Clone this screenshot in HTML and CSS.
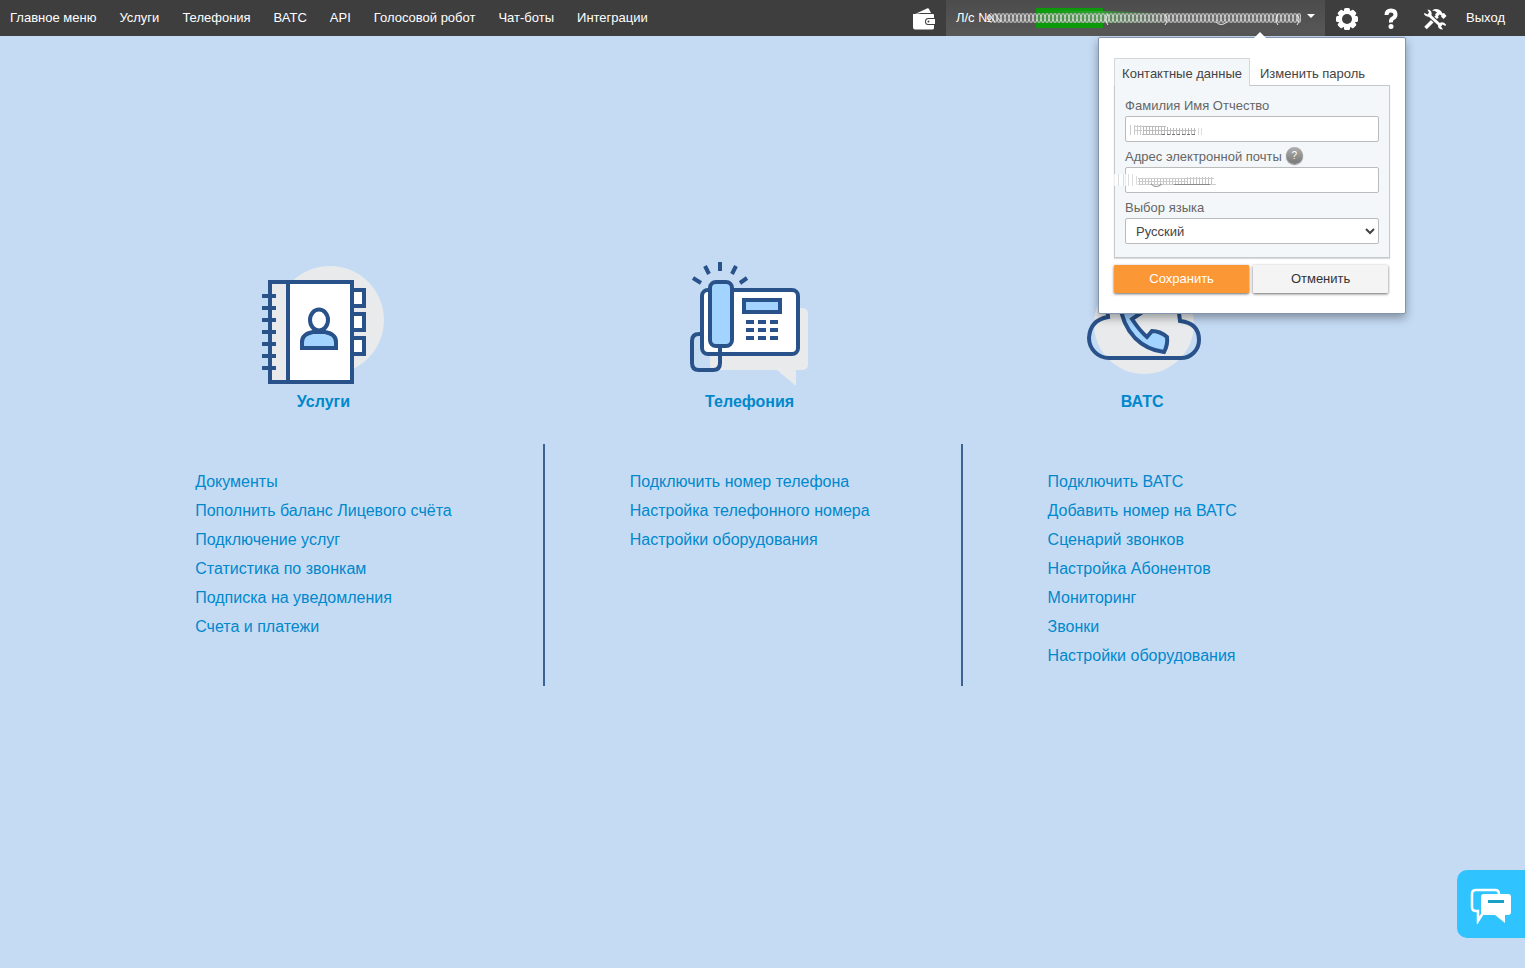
FILE: index.html
```html
<!DOCTYPE html>
<html lang="ru">
<head>
<meta charset="utf-8">
<title>Главное меню</title>
<link rel="stylesheet" href="styles.css">
</head>
<body>
<header class="topbar">
  <nav class="nav">
    <a href="#">Главное меню</a>
    <a href="#">Услуги</a>
    <a href="#">Телефония</a>
    <a href="#">ВАТС</a>
    <a href="#">API</a>
    <a href="#">Голосовой робот</a>
    <a href="#">Чат-боты</a>
    <a href="#">Интеграции</a>
  </nav>
  <div class="tools">
    <button class="tool" type="button" aria-label="Баланс">
      <svg width="24" height="24" viewBox="0 0 24 24"><path d="M3 7 L15 1.500 Q16.500 1 17 2 L19 6 H9z" fill="#fff"/><path d="M1 7H21Q22 7 22 8V11H16Q13 11 13 14.500T16 18H22V21Q22 22.500 20 22.500H3Q1 22.500 1 20z" fill="#fff"/><path d="M16 12H23V17H16Q14 17 14 14.500T16 12z" fill="#fff"/><circle cx="16.500" cy="14.500" r="1" fill="#3e3e3e"/></svg>
    </button>
    <div class="account">
      <button class="account-button" type="button" aria-label="Лицевой счёт">
        <span>Л/с №</span>
        <svg class="account-mask" viewBox="-5 0 313 22" width="313" height="22" aria-hidden="true">
          <defs>
            <pattern id="loops" width="4" height="22" patternUnits="userSpaceOnUse"><ellipse cx="2" cy="11" rx="1.800" ry="4.500" fill="none" stroke="#e4e4e4" stroke-width="1" opacity=".8"/></pattern>
            <linearGradient id="green" x1="0" x2="1"><stop offset="0" stop-color="#0b9a0b"/><stop offset=".4" stop-color="#2fa52f"/><stop offset="1" stop-color="#555" stop-opacity="0"/></linearGradient>
          </defs>
          <rect x="43" y="1" width="67" height="20" fill="#0a9a0a"/>
          <path d="M43 3L110 4L200 7V16H43z" fill="url(#green)"/>
          <path d="M0 6H308V16H0z" fill="#888" opacity=".5"/>
          <rect x="-5" y="5" width="313" height="12" fill="url(#loops)"/>
          <path d="M-4 7l6 8M2 7l6 8M115 7q-4 6 0 11M172 7q4 6 0 11M223 15q5 5 11 0M285 7q-4 6 0 11M304 7q4 6 0 11" fill="none" stroke="#eee"/>
        </svg>
        <span class="caret"></span>
      </button>
      <form class="popup">
        <div class="tabs">
          <button class="tab tab-active" type="button">Контактные данные</button>
          <button class="tab" type="button">Изменить пароль</button>
        </div>
        <div class="panel">
          <div class="field">
            <label for="name">Фамилия Имя Отчество</label>
            <input id="name" type="text">
            <svg class="mask" width="80" height="14" viewBox="0 0 80 14" aria-hidden="true">
              <path d="M4.500 3v10M8.500 3v10M11.500 3v10M14.500 3v10" stroke="#ccc"/>
              <path d="M9 4.500h7M9 8.500h7" stroke="#ccc"/>
              <path d="M17.500 4v9M20.500 4v9M23.500 4v9M26.500 4v9M29.500 4v9M32.500 4v9M35.500 4v9M38.500 5v8M41.500 5v8M44.500 6v7M47.500 6v7M50.500 6v7M53.500 6v7M56.500 6v7M59.500 6v7M62.500 6v7M65.500 6v7M68.500 6v7" stroke="#bbb"/>
              <path d="M16 4.500h24M18 8.500h52M16 12.500h22" stroke="#bbb"/>
              <path d="M36 12.500h34" stroke="#777" stroke-dasharray="3 2"/>
              <path d="M72.500 6v7M75.500 6v7" stroke="#ddd"/>
            </svg>
          </div>
          <div class="field">
            <div class="label-row"><label for="email">Адрес электронной почты</label><button class="help" type="button" aria-label="Справка">?</button></div>
            <input id="email" type="email">
            <svg class="mask mask-wide" width="106" height="14" viewBox="0 0 106 14" aria-hidden="true">
              <path d="M0 1h16v12H0z" fill="#fff" opacity=".7"/>
              <path d="M4.500 1v12M9.500 1v12M14.500 1v12M18.500 1v12M22.500 3v9" stroke="#ddd"/>
              <path d="M25.500 5v7M28.500 5v7M31.500 5v7M34.500 5v7M37.500 5v7M40.500 5v7M43.500 5v7M46.500 5v7M49.500 5v7M52.500 5v7M55.500 5v7M58.500 5v7M61.500 5v7M64.500 5v7M67.500 5v7M70.500 5v7M73.500 4v8M76.500 4v8M79.500 4v8M82.500 4v8M85.500 4v8M88.500 4v8M91.500 4v8M94.500 4v8M97.500 4v8" stroke="#c4c4c4"/>
              <path d="M24 5.500h76M24 8.500h50M24 11.500h78" stroke="#ccc"/>
              <path d="M37 11q5 5 11 0M60 11.500h36" stroke="#888" fill="none"/>
            </svg>
          </div>
          <div class="field">
            <label for="lang">Выбор языка</label>
            <select id="lang"><option>Русский</option></select>
          </div>
        </div>
        <div class="actions">
          <button class="action primary" type="submit">Сохранить</button>
          <button class="action" type="reset">Отменить</button>
        </div>
      </form>
    </div>
    <button class="tool" type="button" aria-label="Настройки">
      <svg width="22" height="22" viewBox="0 0 22 22"><g fill="#fff"><circle cx="11" cy="11" r="9"/><g id="teeth"><rect x="8" y="0" width="6" height="22" rx="1.500"/><rect x="0" y="8" width="22" height="6" rx="1.500"/></g><use href="#teeth" transform="rotate(45 11 11)"/></g><circle cx="11" cy="11" r="5" fill="#3e3e3e"/></svg>
    </button>
    <button class="tool" type="button" aria-label="Помощь">
      <svg width="16" height="22" viewBox="0 0 16 22"><path d="M3.500 7Q3.500 2.500 8 2.500T12.500 6.500Q12.500 9 10 10.200T8 14.500" fill="none" stroke="#fff" stroke-width="4"/><circle cx="8" cy="18.500" r="2.500" fill="#fff"/></svg>
    </button>
    <button class="tool" type="button" aria-label="Инструменты">
      <svg width="24" height="22" viewBox="0 0 24 22">
        <path d="M2.500 20L14.500 8" stroke="#fff" stroke-width="3.500"/>
        <path d="M9 2.500Q14-.5 18 3L19.500 5.500L21 5L23.500 8L20.500 11L18 8.500L18.500 7.500L16.500 6.500L14.500 9L12 6.500L14 4.500Q12 2.500 9 2.500z" fill="#fff"/>
        <path d="M6 7L18 18" stroke="#3e3e3e" stroke-width="5"/>
        <path d="M6 7L18 18" stroke="#fff" stroke-width="3"/>
        <path d="M4.500 1.500Q9.500 2 8.500 7.500Q4 10.500 .8 6L1.500 5L4.500 6.500L6 4.500z" fill="#fff"/>
        <path d="M20 21.500Q14.500 21.500 15 16.500Q19 12 23 16.500L22.500 18L19.500 16.500L18 18.500z" fill="#fff"/>
      </svg>
    </button>
    <a class="logout" href="#">Выход</a>
  </div>
</header>

<main class="main">
  <section class="column">
    <div class="head">
      <svg width="128" height="128" viewBox="0 0 128 128" aria-hidden="true">
        <circle cx="71" cy="62" r="54" fill="#e8eaeb"/>
        <g stroke="#29528a" stroke-width="4">
          <path d="M93 32h12v16H93zM93 56h12v16H93zM93 80h12v16H93z" fill="#fff"/>
          <path d="M11 24h82v100H11z" fill="#fff"/>
          <path d="M11 24h18v100H11z" fill="#e8eaeb"/>
          <path d="M3 38h14M3 50h14M3 62h14M3 74h14M3 86h14M3 98h14M3 110h14"/>
          <path d="M43 90V84Q43 76 54 74H66Q77 76 77 84V90z" fill="#a3d3ff"/>
          <ellipse cx="60" cy="62" rx="9" ry="10.500" fill="#fff"/>
        </g>
      </svg>
      <a class="title" href="#">Услуги</a>
    </div>
    <ul class="links">
      <li><a href="#">Документы</a></li>
      <li><a href="#">Пополнить баланс Лицевого счёта</a></li>
      <li><a href="#">Подключение услуг</a></li>
      <li><a href="#">Статистика по звонкам</a></li>
      <li><a href="#">Подписка на уведомления</a></li>
      <li><a href="#">Счета и платежи</a></li>
    </ul>
  </section>
  <section class="column">
    <div class="head">
      <svg width="128" height="128" viewBox="0 0 128 128" aria-hidden="true">
        <path d="M30 50H116Q122 50 122 56V106Q122 112 116 112H110V128L91 112H30Q24 112 24 106V56Q24 50 30 50z" fill="#e8eaeb"/>
        <g stroke="#29528a" stroke-width="4" fill="none">
          <rect x="16" y="32" width="96" height="64" rx="6" fill="#fff"/>
          <path d="M16 76H13Q6 76 6 83V105Q6 112 13 112H27Q34 112 34 105V88"/>
          <rect x="24" y="24" width="22" height="64" rx="6" fill="#a3d3ff"/>
          <path d="M58 42h36v12H58z" fill="#a3d3ff"/>
          <path d="M60 64h32M60 72h32M60 80h32" stroke-dasharray="8 4"/>
          <path d="M34 4V13M19 8L23 16M7 20L15 25M50 8L46 16M61 20L54 25"/>
        </g>
      </svg>
      <a class="title" href="#">Телефония</a>
    </div>
    <ul class="links">
      <li><a href="#">Подключить номер телефона</a></li>
      <li><a href="#">Настройка телефонного номера</a></li>
      <li><a href="#">Настройки оборудования</a></li>
    </ul>
  </section>
  <section class="column">
    <div class="head">
      <svg width="128" height="128" viewBox="0 0 128 128" aria-hidden="true">
        <circle cx="66" cy="66" r="50" fill="#e8eaeb"/>
        <g stroke="#29528a" stroke-width="4" fill="none">
          <path d="M31 100A20 20 0 0 1 11 80Q12 62 30 59Q26 30 56 26Q90 22 101 55L102 63Q121 65 121 82A18 18 0 0 1 103 100z"/>
          <path d="M42 46Q44 66 57 80Q69 92 86 94Q90 87 89 79Q82 73 74 73L69 79Q61 72 54 61L63 55L56 42z" fill="#a3d3ff"/>
        </g>
      </svg>
      <a class="title" href="#">ВАТС</a>
    </div>
    <ul class="links">
      <li><a href="#">Подключить ВАТС</a></li>
      <li><a href="#">Добавить номер на ВАТС</a></li>
      <li><a href="#">Сценарий звонков</a></li>
      <li><a href="#">Настройка Абонентов</a></li>
      <li><a href="#">Мониторинг</a></li>
      <li><a href="#">Звонки</a></li>
      <li><a href="#">Настройки оборудования</a></li>
    </ul>
  </section>
</main>

<button class="chat" type="button" aria-label="Чат">
  <svg width="42" height="36" viewBox="0 0 42 36"><path d="M29 6Q29 2 25 2H6Q2 2 2 6V19Q2 23 6 23H8V33L13 25" fill="none" stroke="#fff" stroke-width="2.500"/><path d="M14 6H38Q41 6 41 9V24Q41 27 38 27H35V35L25 27H14Q11 27 11 24V9Q11 6 14 6z" fill="#fff"/><path d="M18 13.500H34" stroke="#1b9fc4" stroke-width="3"/></svg>
</button>
</body>
</html>
```
FILE: styles.css
```css
* { box-sizing: border-box; }

body {
  margin: 0;
  min-height: 100vh;
  background: #c5dbf4;
  font: 13px/20px "Liberation Sans", Arial, sans-serif;
  color: #444;
}

a { text-decoration: none; }

button {
  font: inherit;
  border: 0;
  padding: 0;
  background: none;
  cursor: pointer;
}

.topbar {
  display: flex;
  justify-content: space-between;
  height: 36px;
  background: #3e3e3e;
}

.nav {
  display: flex;
  align-items: center;
  gap: 23px;
  padding-left: 10px;
}

.nav a, .logout { color: #fff; }

.tools { display: flex; align-items: stretch; }

.tool {
  display: flex;
  align-items: center;
  justify-content: center;
  width: 44px;
  padding-top: 2px;
}

.logout { padding: 8px 20px 8px 9px; }

.account { position: relative; }

.account-button {
  display: flex;
  align-items: center;
  height: 36px;
  padding: 0 10px;
  background: linear-gradient(#4c4c4c, #585858);
  color: #fff;
}

.account-mask { margin: 0 6px 0 -4px; }

.caret {
  border: 4px solid transparent;
  border-top-color: #fff;
}

.popup {
  position: absolute;
  top: 37px;
  right: -81px;
  z-index: 2;
  width: 308px;
  padding: 20px 15px;
  background: #fff;
  border: 1px solid #8295ad;
  border-radius: 2px;
  box-shadow: 0 4px 10px rgba(0, 0, 0, .35);
}

.popup::before {
  content: "";
  position: absolute;
  top: -6px;
  left: 155px;
  border: 6px solid transparent;
  border-top: 0;
  border-bottom-color: #fff;
}

.tabs { display: flex; }

.tab {
  height: 28px;
  padding: 3px 10px 0;
  color: #444;
}

.tab-active {
  position: relative;
  z-index: 1;
  margin-bottom: -1px;
  padding: 3px 7px 0;
  background: #f3f7fa;
  border: 1px solid #d4d8dc;
  border-bottom: 0;
}

.panel {
  display: flex;
  flex-direction: column;
  gap: 5px;
  margin-top: -1px;
  padding: 10px 10px 13px;
  background: #f3f7fa;
  border: 1px solid #c5c9cd;
  box-shadow: 0 1px 1px #ddd;
}

.field {
  position: relative;
  display: flex;
  flex-direction: column;
  color: #666;
}

.label-row {
  display: flex;
  align-items: flex-start;
  gap: 4px;
  height: 20px;
}

.help {
  width: 17px;
  height: 17px;
  border-radius: 50%;
  background: linear-gradient(#b0b0b0, #777);
  box-shadow: 0 1px 1px #888;
  color: #fff;
  font: 10px/17px "Liberation Sans", Arial, sans-serif;
}

.field input, .field select {
  width: 100%;
  height: 26px;
  padding: 0 6px;
  border: 1px solid #bbb;
  border-radius: 2px;
  background-color: #fff;
  color: #444;
  font: inherit;
}

.field select { padding: 0 0 0 6px; }

.mask {
  position: absolute;
  left: 1px;
  bottom: 6px;
}

.mask-wide { left: -11px; }

.actions {
  display: flex;
  gap: 4px;
  padding: 7px 2px 0 0;
}

.action {
  flex: 1;
  height: 28px;
  background: #f4f4f4;
  border-radius: 1px;
  box-shadow: 0 1px 3px rgba(0, 0, 0, .6);
  color: #333;
}

.primary { background: #fc9735; color: #fff; }

.main {
  display: flex;
  justify-content: center;
  padding-top: 222px;
}

.column { display: flex; flex-direction: column; }

.column + .column { padding-left: 85px; }

.head {
  display: flex;
  flex-direction: column;
  align-items: center;
  gap: 6px;
  padding: 0 93px 32px 0;
}

.title {
  color: #0088cc;
  font-size: 16px;
  font-weight: bold;
}

.links {
  flex: 1;
  margin: 0;
  padding: 23px 91px 16px 0;
  border-right: 2px solid #3c6294;
  list-style: none;
  font-size: 16px;
  line-height: 29px;
}

.column:last-child .links { border-color: transparent; }

.links a { color: #0088cc; }

.chat {
  position: fixed;
  right: 0;
  bottom: 30px;
  display: flex;
  align-items: center;
  justify-content: center;
  width: 68px;
  height: 68px;
  padding-top: 4px;
  background: #2fc4ff;
  border-radius: 10px 0 0 10px;
}
```
